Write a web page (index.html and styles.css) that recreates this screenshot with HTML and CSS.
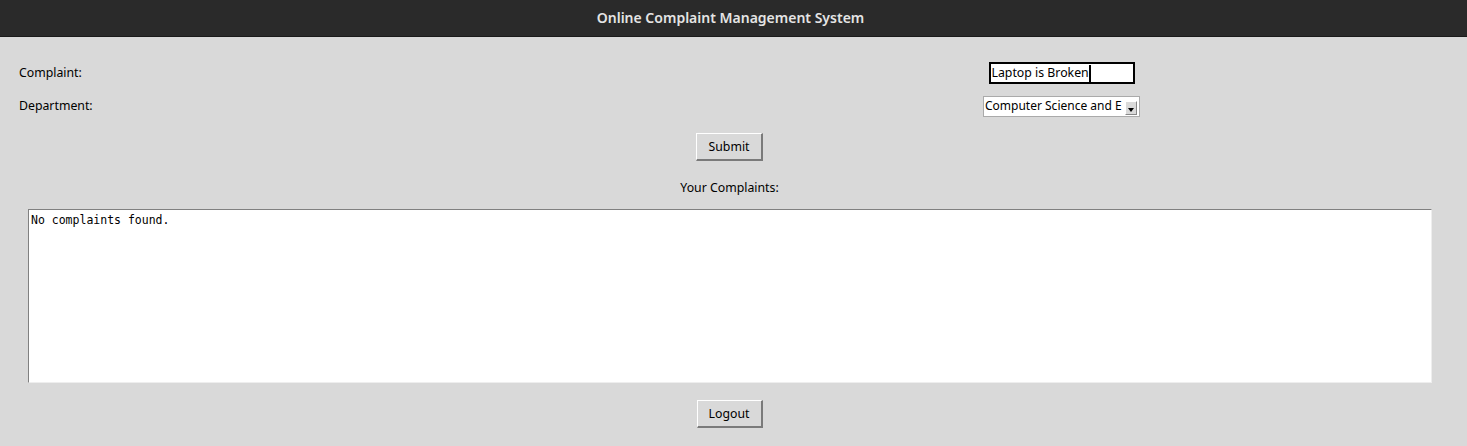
FILE: index.html
```html
<!DOCTYPE html>
<html>
<head>
<meta charset="utf-8">
<title>Online Complaint Management System</title>
<link rel="stylesheet" href="styles.css">
</head>
<body>
<header class="titlebar">Online Complaint Management System</header>
<main class="content">
  <div class="form">
    <label class="label">Complaint:</label>
    <div class="cell"><div class="entry">Laptop is Broken<span class="caret"></span></div></div>
    <label class="label">Department:</label>
    <div class="cell">
      <div class="option">
        <span class="option-text">Computer Science and E</span>
        <span class="option-ind"><span class="tri"></span></span>
      </div>
    </div>
  </div>
  <div class="center"><button class="btn submit">Submit</button></div>
  <div class="heading">Your Complaints:</div>
  <div class="textbox">No complaints found.</div>
  <div class="center"><button class="btn logout">Logout</button></div>
</main>
</body>
</html>
```
FILE: styles.css
```css
html, body {
  margin: 0;
  padding: 0;
  background: #d9d9d9;
  height: 446px;
  overflow: hidden;
}
body {
  font-family: "Noto Sans", "DejaVu Sans", sans-serif;
  font-size: 12.3px;
  color: #000;
}
.titlebar {
  background: #2a2a2a;
  border-bottom: 1px solid #1a1a1a;
  color: #e4e4e4;
  font-weight: 600;
  font-size: 14px;
  display: flex;
  align-items: center;
  justify-content: center;
  box-sizing: border-box;
  height: 37px;
  padding-bottom: 1px;
  padding-right: 6px;
}
.content {
  display: flex;
  flex-direction: column;
  width: 1459px;
}
.form {
  display: grid;
  grid-template-columns: 964px 157px;
  padding-left: 19px;
  margin-top: 25px;
  row-gap: 11px;
  align-items: center;
}
.label {
  line-height: 22px;
}
.cell {
  display: flex;
  justify-content: center;
}
.entry {
  width: 146px;
  height: 22px;
  box-sizing: border-box;
  border: 2px solid #000;
  background: #fff;
  padding-left: 1px;
  line-height: 18px;
  display: flex;
  align-items: center;
}
.caret {
  display: inline-block;
  width: 2px;
  height: 17px;
  background: #000;
}
.option {
  width: 157px;
  height: 21px;
  box-sizing: border-box;
  background: #fff;
  border: 1px solid #aaa;
  display: flex;
  align-items: center;
  padding-left: 1px;
  padding-bottom: 1px;
  font-size: 12px;
}
.option-text {
  flex: 1;
  white-space: nowrap;
  overflow: hidden;
}
.option-ind {
  flex: none;
  width: 12px;
  height: 14px;
  margin-left: 2px;
  margin-right: 2px;
  margin-top: 4px;
  background: #d9d9d9;
  border-top: 1px solid #fff;
  border-left: 1px solid #fff;
  border-right: 1px solid #888;
  border-bottom: 1px solid #888;
  box-sizing: border-box;
  display: flex;
  align-items: flex-end;
  justify-content: center;
  padding-bottom: 2px;
}
.tri {
  width: 0;
  height: 0;
  border-left: 3px solid transparent;
  border-right: 3px solid transparent;
  border-top: 4px solid #000;
}
.center {
  display: flex;
  justify-content: center;
}
.btn {
  font-family: "Noto Sans", "DejaVu Sans", sans-serif;
  font-size: 12.3px;
  background: #d9d9d9;
  color: #000;
  height: 28px;
  border-top: 1px solid #fff;
  border-left: 1px solid #fff;
  border-right: 2px solid #7a7a7a;
  border-bottom: 2px solid #7a7a7a;
  box-sizing: border-box;
  padding: 0;
  border-radius: 0;
}
.submit {
  width: 67px;
  margin-top: 16px;
}
.heading {
  text-align: center;
  margin-top: 17px;
  line-height: 20px;
}
.textbox {
  margin: 11px 0 0 28px;
  width: 1404px;
  height: 174px;
  box-sizing: border-box;
  background: #fff;
  border-top: 1px solid #808080;
  border-left: 1px solid #808080;
  border-right: 1px solid #eee;
  border-bottom: 1px solid #eee;
  font-family: "DejaVu Sans Mono", monospace;
  font-size: 11.5px;
  padding: 3px 0 0 2px;
  line-height: 15px;
}
.logout {
  width: 66px;
  margin-top: 17px;
}
```
